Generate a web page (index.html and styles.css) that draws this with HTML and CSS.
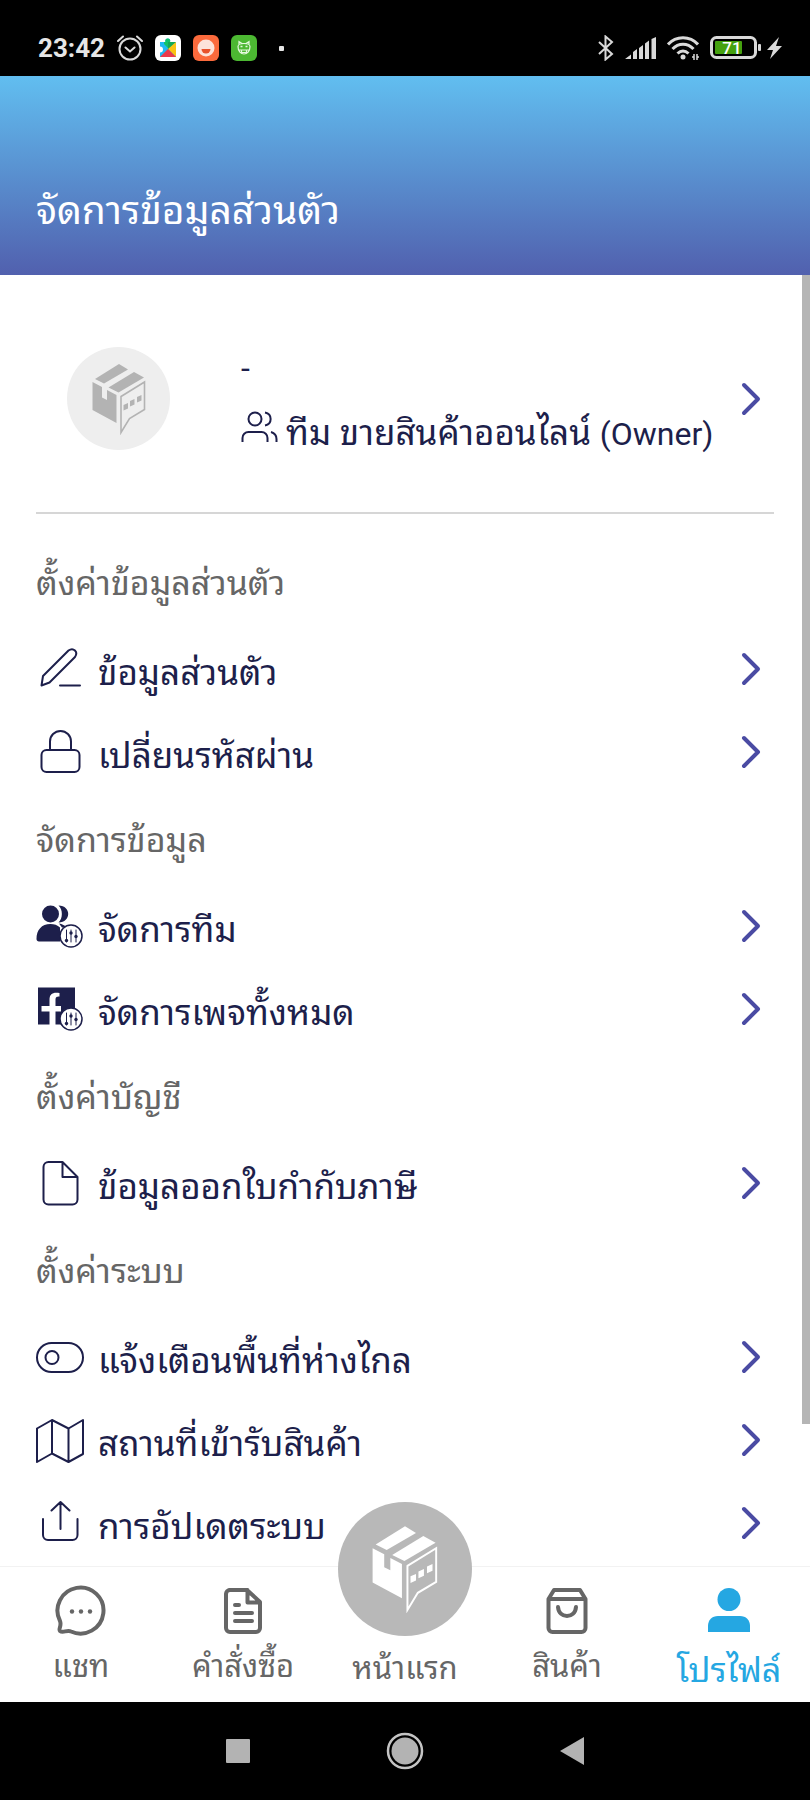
FILE: index.html
```html
<!DOCTYPE html>
<html lang="th">
<head>
<meta charset="utf-8">
<meta name="viewport" content="width=device-width, initial-scale=1">
<title>จัดการข้อมูลส่วนตัว</title>
<link rel="stylesheet" href="styles.css">
</head>
<body>
<svg class="sprite" aria-hidden="true">
  <symbol id="chevron" viewBox="0 0 24 36"><path d="M4 4l14 14L4 32" fill="none" stroke="#4a4ba3" stroke-width="4" stroke-linecap="round" stroke-linejoin="round"/></symbol>
  <symbol id="tune" viewBox="0 0 24 24">
    <circle cx="12" cy="12" r="11" fill="#fff" stroke="#1d1f4b" stroke-width="1.5"/>
    <path d="M7.500 6v12M12 6v12M17 6v12" stroke="#1d1f4b" stroke-width="1" fill="none"/>
    <g fill="#1d1f4b" stroke="none"><circle cx="7.500" cy="16.500" r="1.700"/><circle cx="12" cy="9" r="1.700"/><circle cx="17" cy="12.500" r="1.700"/></g>
  </symbol>
  <symbol id="parcel" viewBox="0 0 54 72">
    <path d="M3 16L27 1L36 6.500L12 20.500Z"/>
    <path d="M16.500 24.500L42 9L52 14.500L26.500 29.500Z"/>
    <path d="M.5 19L10 24V34.500L15 37V27L24.500 32V60L.5 47Z"/>
    <path d="M29 33.500L52.500 19V46.500L37.500 55.500L29 69.500Z" fill="none" stroke="currentColor" stroke-width="1.600"/>
    <path d="M31.500 42l4.500-2v5.500l-4.500 2ZM38 38l4.500-2v5.500l-4.500 2ZM45 34l4.500-2v5.500L45 39.500Z"/>
  </symbol>
</svg>
<div class="phone">
  <div class="status">
    <div class="status-side">
      <span class="clock">23:42</span>
      <svg width="26" height="26" viewBox="0 0 26 26" fill="none" stroke="#d9d9d9" stroke-width="2" stroke-linecap="round"><circle cx="13" cy="14" r="10.500"/><path d="M8.500 12.500l4.500 4 4.500-4M1 6l5-4.500M25 6l-5-4.500"/></svg>
      <svg width="26" height="26" viewBox="0 0 26 26"><rect width="26" height="26" rx="6" fill="#fff"/><path d="M5 7h5.500a2.500 2.500 0 1 1 4.500 0h6v15H5v-4.500a2.500 2.500 0 0 0 0-6Z" fill="#1fb9f2"/><path d="M10.500 7a2.500 2.500 0 1 1 4.500 0v8L9 9V7Z" fill="#12c26a"/><path d="M13 7h8l-8 8Z" fill="#14a857"/><path d="M21 7v15l-8-8Z" fill="#fbc312"/><path d="M13 14l8 8H5Z" fill="#ea3b4b"/></svg>
      <svg width="26" height="26" viewBox="0 0 26 26"><rect width="26" height="26" rx="6" fill="#fb6a3c"/><circle cx="13" cy="13" r="8.500" fill="#fde3da"/><path d="M8.500 14h9a4.500 4.500 0 0 1-9 0Z" fill="#e8532c"/></svg>
      <svg width="26" height="26" viewBox="0 0 26 26"><rect width="26" height="26" rx="6" fill="#4cb832"/><path d="M8 10V6.500l3 2h4l3-2V10M7 11.500c0 10 12 10 12 0 0-4-12-4-12 0ZM7 15h12M10.500 15v2.500h5V15" fill="none" stroke="#e4f8dd" stroke-width="1.200"/><path d="M9.500 11.500h2M14.500 11.500h2" stroke="#e4f8dd" stroke-width="1.500"/></svg>
      <span class="more-dot"></span>
    </div>
    <div class="status-side status-right">
      <svg width="16" height="26" viewBox="0 0 16 26" fill="none" stroke="#d9d9d9" stroke-width="2"><path d="M1 7l13 12-6.500 5.500v-23L14 7 1 19"/></svg>
      <svg width="31" height="22" viewBox="0 0 31 22" fill="#d9d9d9"><path d="M0 22l6-4.500V22ZM8 15l4-3v10H8ZM14 11l4-3v14h-4ZM20 6.500l4-3V22h-4ZM26.500 2L31 0v22h-4.500Z"/></svg>
      <svg width="32" height="26" viewBox="0 0 32 26" fill="none" stroke="#d9d9d9" stroke-width="3"><path d="M1 9.500c8-9 22-9 30 0M5.500 14c6-6.500 15-6.500 21 0M10.500 18.500c3.500-3.500 7.500-3.500 11 0"/><circle cx="16" cy="22" r="2.500" fill="#d9d9d9" stroke="none"/><path d="M27 19v6M30 19v6M25 22h2M30 22h2" stroke-width="1.500"/></svg>
      <span class="power">
        <svg width="52" height="24" viewBox="0 0 52 24"><rect x="1.500" y="1.500" width="44" height="20" rx="5" fill="none" stroke="#d9d9d9" stroke-width="3"/><rect x="5" y="5" width="27" height="13" rx="1" fill="#45a10f"/><rect x="48" y="8" width="3" height="7" rx="1" fill="#d9d9d9"/><text x="22" y="18" class="battery-text">71</text></svg>
        <svg width="15" height="24" viewBox="0 0 15 24"><path d="M12 1L0 14h6L3 23l12-13H9Z" fill="#d9d9d9"/></svg>
      </span>
    </div>
  </div>

  <header class="header"><h1 class="title">จัดการข้อมูลส่วนตัว</h1></header>

  <main class="content">
    <a class="profile" href="#profile">
      <span class="avatar"><svg width="54" height="72"><use href="#parcel"/></svg></span>
      <span class="profile-text">
        <span class="profile-line latin">-</span>
        <span class="profile-line">
          <svg class="team-icon" width="37" height="32" viewBox="0 0 37 32" fill="none" stroke="#1d1f4b" stroke-width="2"><circle cx="14" cy="8" r="6.500"/><path d="M1.500 31v-4a6 6 0 0 1 6-6h13a6 6 0 0 1 6 6v4M24 1.500c7.500 1.500 7.500 11.500 0 13M30 21c3.500 1 5.500 3.500 5.500 7v3"/></svg>
          <span>ทีม ขายสินค้าออนไลน์ <span class="latin">(Owner)</span></span>
        </span>
      </span>
      <svg class="chevron" width="24" height="36"><use href="#chevron"/></svg>
    </a>

    <section>
      <h2 class="heading">ตั้งค่าข้อมูลส่วนตัว</h2>
      <a class="row" href="#info"><svg class="icon" viewBox="0 0 48 48"><path d="M5.500 40.500L7 31 32.500 5.500c5-3.500 10 1.500 6.500 6.500L13.500 37.500ZM24 40.500h20"/></svg>ข้อมูลส่วนตัว<svg class="chevron" width="24" height="36"><use href="#chevron"/></svg></a>
      <a class="row" href="#password"><svg class="icon" viewBox="0 0 48 48"><rect x="5.500" y="22" width="38" height="22" rx="5"/><path d="M14 22v-8.500a10.500 10.500 0 0 1 21 0V22"/></svg>เปลี่ยนรหัสผ่าน<svg class="chevron" width="24" height="36"><use href="#chevron"/></svg></a>
    </section>
    <section>
      <h2 class="heading">จัดการข้อมูล</h2>
      <a class="row" href="#team"><svg class="icon" viewBox="0 0 48 48"><g fill="#1d1f4b" stroke="none"><circle cx="14.500" cy="12" r="8.500"/><path d="M22.500 3.500c13 0 13 17 0 17 4.500-4 4.500-13 0-17ZM.500 37c0-9 5-15 14-15 3.500 0 7 1 9.500 3.500V39.500H3C1.500 39.500.500 38.500.500 37Z"/><path d="M23 21.500c3 .500 6 2 8 4h-5Z"/></g><use href="#tune" x="23" y="22" width="24" height="24"/></svg>จัดการทีม<svg class="chevron" width="24" height="36"><use href="#chevron"/></svg></a>
      <a class="row" href="#pages"><svg class="icon" viewBox="0 0 48 48"><path d="M2 2.500H39V39.500H19.500V26.500H25V21H19.500V15c0-3 1-3.500 4-3.500V8c-7-1-10 1-10 7v6H5.500v5.500h8v13H2Z" fill="#1d1f4b" stroke="none"/><use href="#tune" x="23" y="22" width="24" height="24"/></svg>จัดการเพจทั้งหมด<svg class="chevron" width="24" height="36"><use href="#chevron"/></svg></a>
    </section>
    <section>
      <h2 class="heading">ตั้งค่าบัญชี</h2>
      <a class="row" href="#tax"><svg class="icon" viewBox="0 0 48 48"><path d="M12.500 3H26.500L41.500 18V40.500a5 5 0 0 1-5 5h-24a5 5 0 0 1-5-5V8a5 5 0 0 1 5-5ZM26.500 3V18h15"/></svg>ข้อมูลออกใบกำกับภาษี<svg class="chevron" width="24" height="36"><use href="#chevron"/></svg></a>
    </section>
    <section>
      <h2 class="heading">ตั้งค่าระบบ</h2>
      <a class="row" href="#remote"><svg class="icon" viewBox="0 0 48 48"><rect x="1" y="10" width="46" height="29" rx="14.500"/><circle cx="16" cy="24.500" r="6.500"/></svg>แจ้งเตือนพื้นที่ห่างไกล<svg class="chevron" width="24" height="36"><use href="#chevron"/></svg></a>
      <a class="row" href="#pickup"><svg class="icon" viewBox="0 0 48 48"><path d="M1 12.500L16 4l16.500 8.500L47 4v34l-14.500 8L16 37.500 1 46ZM16 4v33.500M32.500 12.500V46"/></svg>สถานที่เข้ารับสินค้า<svg class="chevron" width="24" height="36"><use href="#chevron"/></svg></a>
      <a class="row" href="#update"><svg class="icon" viewBox="0 0 48 48"><path d="M7 20v16a5 5 0 0 0 5 5h24.500a5 5 0 0 0 5-5V20M24.500 30V3M15.500 11.500l9-8.500 9 8.500"/></svg>การอัปเดตระบบ<svg class="chevron" width="24" height="36"><use href="#chevron"/></svg></a>
    </section>
    <span class="scrollbar"></span>
  </main>

  <nav class="tabs">
    <a class="tab" href="#chat"><svg class="tab-icon" viewBox="0 0 52 52"><path d="M5 36A23 23 0 1 1 16 46.500c-4-2-8 2-11-.500-2-2 2-5 0-10Z"/><g fill="#666" stroke="none"><circle cx="17" cy="26.500" r="2.200"/><circle cx="26" cy="26.500" r="2.200"/><circle cx="35" cy="26.500" r="2.200"/></g></svg>แชท</a>
    <a class="tab" href="#orders"><svg class="tab-icon" viewBox="0 0 52 52"><path d="M12 5H30L43 17V43a4 4 0 0 1-4 4H13a4 4 0 0 1-4-4V9a4 4 0 0 1 4-4ZM30.500 5V17.500H43M18 20h4M18 28h17M18 36h17"/></svg>คำสั่งซื้อ</a>
    <a class="tab tab-home" href="#home"><span class="home-disc"><svg width="66" height="88"><use href="#parcel"/></svg></span>หน้าแรก</a>
    <a class="tab" href="#products"><svg class="tab-icon" viewBox="0 0 52 52"><path d="M7.500 14L13 5H39l5.500 9V43a4 4 0 0 1-4 4h-29a4 4 0 0 1-4-4ZM7.500 14h37M17 22c1 12 17 12 18 0"/></svg>สินค้า</a>
    <a class="tab tab-active" href="#me"><svg class="tab-icon" viewBox="0 0 52 52"><g fill="#25a7e2" stroke="none"><circle cx="26" cy="14.500" r="11.500"/><path d="M5 47V41c0-6 4-10 10-10H37c6 0 10 4 10 10v6Z"/></g></svg>โปรไฟล์</a>
  </nav>

  <div class="sysnav">
    <button class="sys" aria-label="Recents"><svg width="24" height="24" viewBox="0 0 24 24"><rect width="24" height="24" rx="1" fill="#b3b3b3"/></svg></button>
    <button class="sys" aria-label="Home"><svg width="38" height="38" viewBox="0 0 38 38"><circle cx="19" cy="19" r="17" fill="none" stroke="#c4c4c4" stroke-width="2.500"/><circle cx="19" cy="19" r="13.500" fill="#b3b3b3"/></svg></button>
    <button class="sys" aria-label="Back"><svg width="24" height="28" viewBox="0 0 24 28"><path d="M24 0v28L0 14Z" fill="#b3b3b3"/></svg></button>
  </div>
</div>
</body>
</html>
```

FILE: styles.css
```css
* { box-sizing: border-box; }

body {
  margin: 0;
  background: #fff;
  font-family: Roboto, "Noto Sans Thai Looped", "Noto Looped Thai", "Noto Sans Thai", "Noto Sans", sans-serif;
  color: #1d1f4b;
}

a { color: inherit; text-decoration: none; }
svg { flex: none; }
.sprite { display: none; }

.phone { min-height: 100vh; display: flex; flex-direction: column; }

.status {
  height: 76px;
  padding: 20px 28px 0 38px;
  background: #000;
  display: flex;
  justify-content: space-between;
  align-items: center;
}
.status-side { display: flex; align-items: center; gap: 12px; }
.status-right { gap: 11px; }
.power { display: flex; align-items: center; gap: 5px; }
.clock { font-size: 26px; font-weight: 700; line-height: 32px; color: #e6e6e6; }
.more-dot { width: 5px; height: 5px; margin-left: 10px; border-radius: 1px; background: #e6e6e6; }
.battery-text { font-size: 17px; font-weight: 500; fill: #fff; text-anchor: middle; }

.header {
  height: 199px;
  padding: 0 36px 38px;
  background: linear-gradient(#61bef0, #5160ae);
  display: flex;
  align-items: flex-end;
}
.title { margin: 0; font-size: 39px; font-weight: 400; line-height: 52px; color: #fff; }

.content { position: relative; flex: 1; padding: 0 36px; }
.scrollbar { position: absolute; top: 0; right: 0; width: 8px; height: 89%; background: #b5b5b5; }

.profile {
  height: 239px;
  margin-bottom: 22px;
  padding: 10px 10px 0 31px;
  border-bottom: 2px solid #d6d6d6;
  display: flex;
  align-items: center;
}
.avatar {
  width: 103px;
  height: 103px;
  border-radius: 50%;
  background: #eee;
  color: #b3b3b3;
  fill: currentColor;
  display: grid;
  place-items: center;
}
.profile-text { margin-left: 71px; padding-top: 4px; font-size: 35px; line-height: 66px; white-space: nowrap; }
.profile-line { display: flex; align-items: center; gap: 8px; }
.latin { font-size: 32px; }
.team-icon { margin-bottom: 14px; }
.chevron { margin-left: auto; }

.heading { margin: 0; height: 91px; font-size: 34px; font-weight: 400; line-height: 94px; color: #666; }
.row { height: 83px; padding-right: 10px; display: flex; align-items: center; font-size: 35px; }
.icon { width: 48px; height: 48px; margin-right: 14px; fill: none; stroke: #1d1f4b; stroke-width: 2; stroke-linejoin: round; stroke-linecap: round; }

.tabs {
  position: relative;
  height: 136px;
  border-top: 1px solid #f2f2f2;
  background: #fff;
  display: grid;
  grid-template-columns: repeat(5, 1fr);
}
.tab { padding-top: 18px; display: flex; flex-direction: column; align-items: center; font-size: 31px; line-height: 60px; color: #666; }
.tab-icon { width: 52px; height: 52px; fill: none; stroke: #666; stroke-width: 4; stroke-linejoin: round; stroke-linecap: round; }
.tab-active { color: #25a7e2; font-size: 34px; line-height: 66px; }
.tab-home { position: relative; padding-top: 72px; }
.home-disc {
  position: absolute;
  top: -65px;
  width: 134px;
  height: 134px;
  border-radius: 50%;
  background: #b8b8b8;
  color: #fff;
  fill: currentColor;
  display: grid;
  place-items: center;
}

.sysnav { height: 98px; background: #000; display: flex; justify-content: center; align-items: center; gap: 136px; }
.sys { padding: 0; border: 0; background: none; display: flex; }
```
